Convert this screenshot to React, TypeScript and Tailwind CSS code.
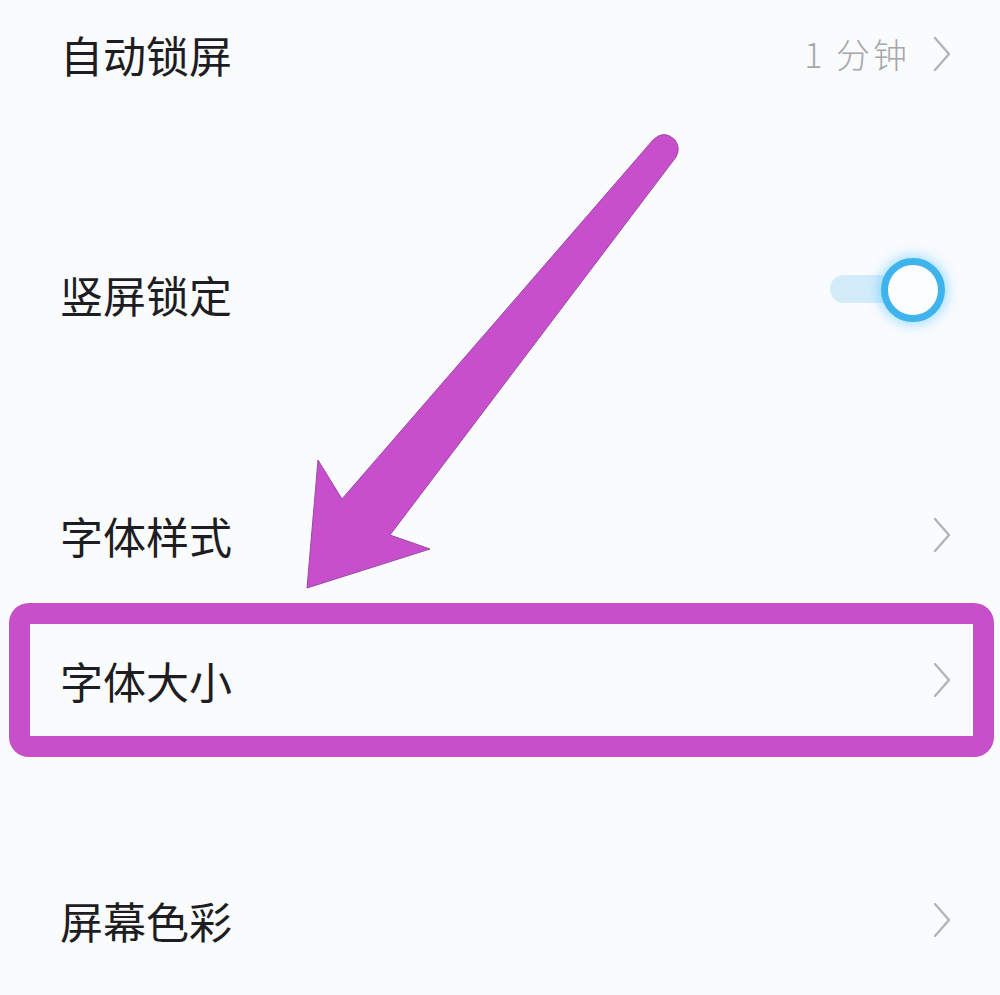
import * as React from "react";

const font = { fontFamily: '"Noto Sans CJK SC", "Noto Sans", sans-serif' };

function Chevron() {
  return (
    <svg width="20" height="36" viewBox="0 0 20 36" fill="none" className="shrink-0">
      <path d="M3 2 L17 18 L3 34" stroke="#b4b4b8" strokeWidth="2.4" strokeLinecap="round" strokeLinejoin="round" />
    </svg>
  );
}

function Toggle() {
  return (
    <div className="relative h-[70px] w-[115px]">
      <div className="absolute left-0 top-[16px] h-[28px] w-[105px] rounded-full bg-[#d3ecfa]" />
      <div className="absolute left-[51px] top-[-1px] h-[64px] w-[64px] rounded-full border-[7px] border-[#3fb4ec] bg-[#fbfdff] shadow-[0_0_12px_3px_rgba(80,200,255,0.5)]" />
    </div>
  );
}

function Row({ label, h, children }: { label: string; h: string; children?: React.ReactNode }) {
  return (
    <div className={`flex items-center justify-between pl-[60px] pr-[48px] ${h}`}>
      <span className="text-[43px] leading-none text-[#1d1d22]">{label}</span>
      {children}
    </div>
  );
}

export default function App() {
  return (
    <div className="relative h-[995px] w-[1000px] overflow-hidden bg-[#fafbfd]" style={font}>
      <Row label="自动锁屏" h="h-[108px]">
        <div className="flex items-center gap-[22px]">
          <span className="text-[34px] font-light leading-none tracking-[3px] text-[#a6a6ab]">1 分钟</span>
          <Chevron />
        </div>
      </Row>
      <div className="flex h-[372px] items-center justify-between pl-[60px] pr-[55px]">
        <span className="text-[43px] leading-none text-[#1d1d22]">竖屏锁定</span>
        <Toggle />
      </div>
      <Row label="字体样式" h="h-[110px]">
        <Chevron />
      </Row>
      <div className="mt-[13px] ml-[9px] mr-[6px] flex h-[154px] items-center justify-between rounded-[20px] border-[21px] border-[#c84fca] pl-[30px] pr-[21px]">
        <span className="text-[43px] leading-none text-[#1d1d22]">字体大小</span>
        <Chevron />
      </div>
      <Row label="屏幕色彩" h="h-[326px]">
        <Chevron />
      </Row>

      <svg className="pointer-events-none absolute left-0 top-0" width="1000" height="995" viewBox="0 0 1000 995">
        <path
          d="M653 140 Q664 129 675 140 Q681 148 676 157 L390 535 L430 549 L307 588 L318 460 L342 499 Z"
          fill="#c84fcc"
          stroke="#9b4aa8"
          strokeWidth="1"
          strokeLinejoin="round"
        />
      </svg>
    </div>
  );
}
